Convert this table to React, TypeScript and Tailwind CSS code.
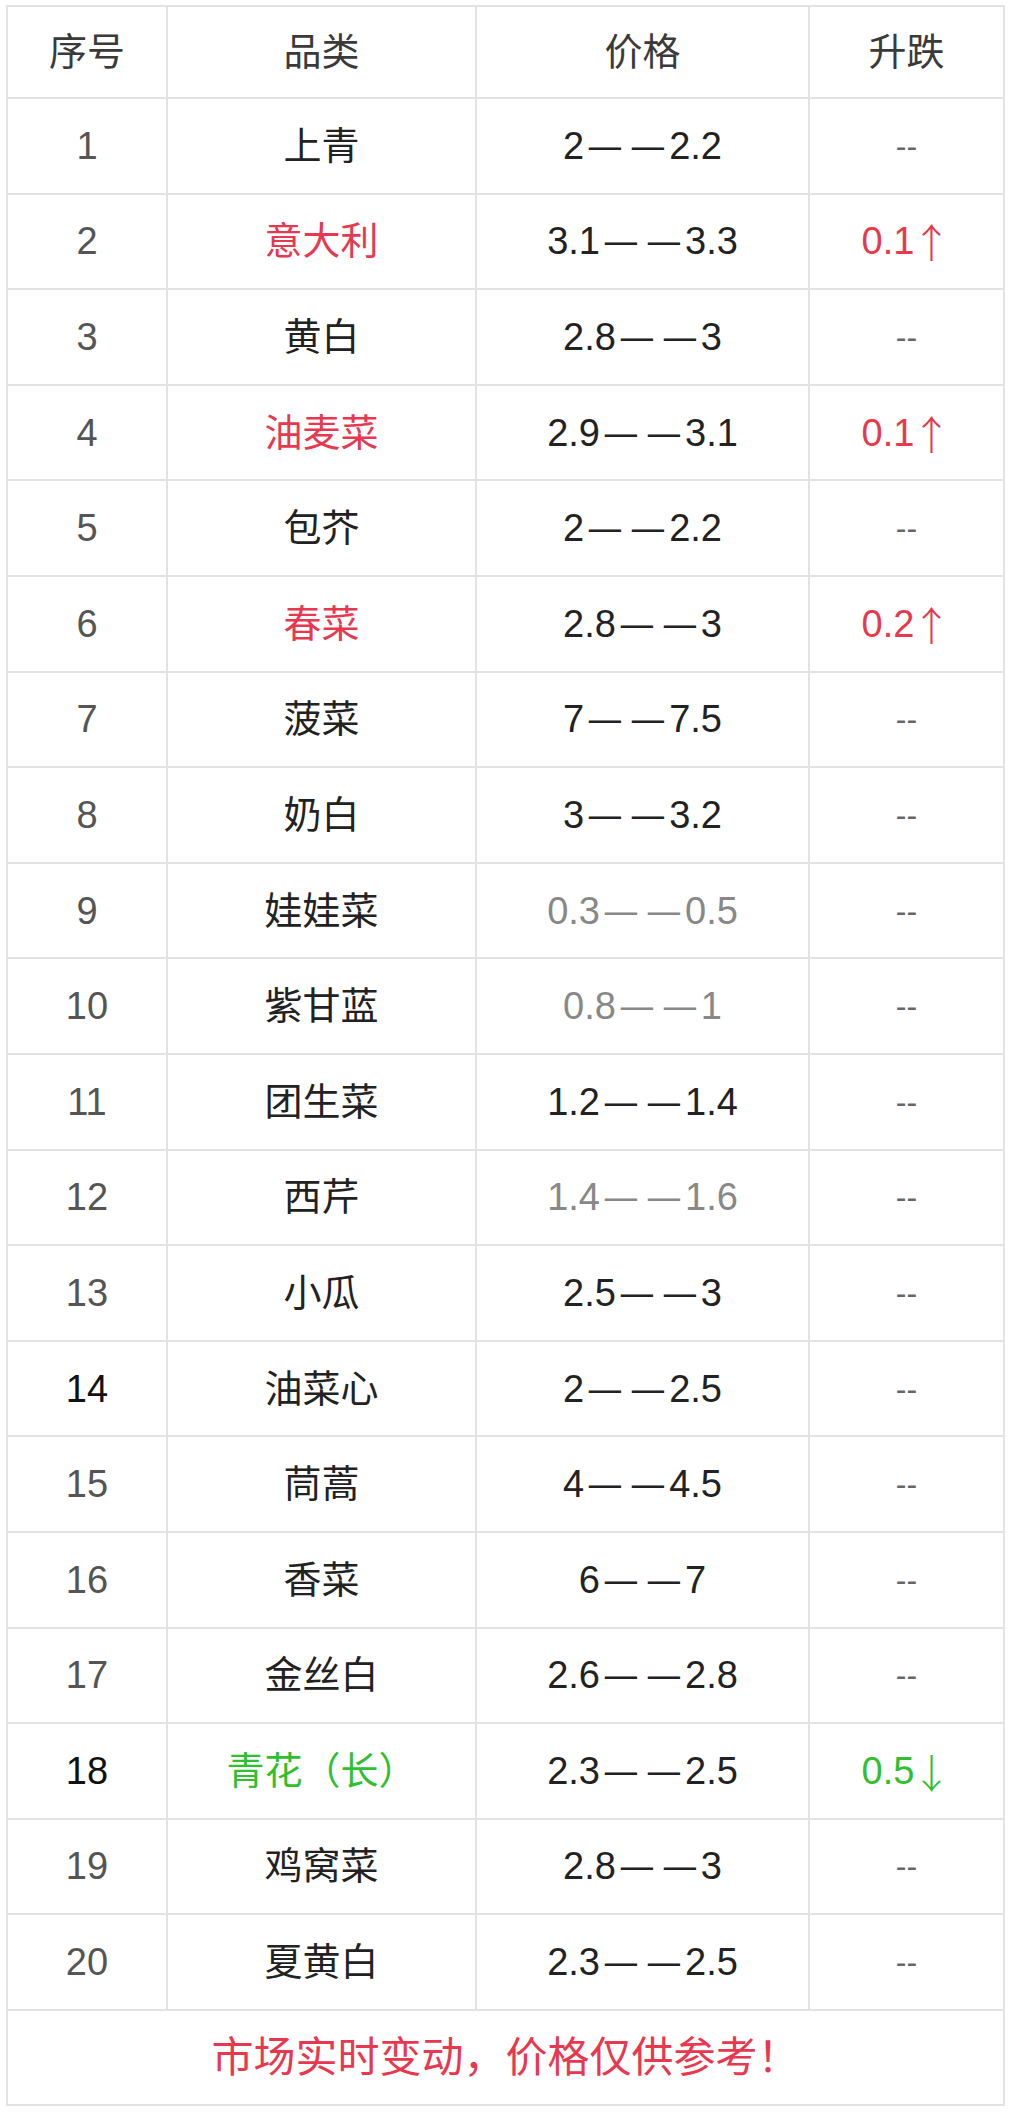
const rows: { no: string; name: string; price: string; change: string; tone?: "up" | "down"; grayPrice?: boolean; darkNo?: boolean }[] = [
  { no: "1", name: "上青", price: "2——2.2", change: "--" },
  { no: "2", name: "意大利", price: "3.1——3.3", change: "0.1↑", tone: "up" },
  { no: "3", name: "黄白", price: "2.8——3", change: "--" },
  { no: "4", name: "油麦菜", price: "2.9——3.1", change: "0.1↑", tone: "up" },
  { no: "5", name: "包芥", price: "2——2.2", change: "--" },
  { no: "6", name: "春菜", price: "2.8——3", change: "0.2↑", tone: "up" },
  { no: "7", name: "菠菜", price: "7——7.5", change: "--" },
  { no: "8", name: "奶白", price: "3——3.2", change: "--" },
  { no: "9", name: "娃娃菜", price: "0.3——0.5", change: "--", grayPrice: true },
  { no: "10", name: "紫甘蓝", price: "0.8——1", change: "--", grayPrice: true },
  { no: "11", name: "团生菜", price: "1.2——1.4", change: "--" },
  { no: "12", name: "西芹", price: "1.4——1.6", change: "--", grayPrice: true },
  { no: "13", name: "小瓜", price: "2.5——3", change: "--" },
  { no: "14", name: "油菜心", price: "2——2.5", change: "--", darkNo: true },
  { no: "15", name: "茼蒿", price: "4——4.5", change: "--" },
  { no: "16", name: "香菜", price: "6——7", change: "--" },
  { no: "17", name: "金丝白", price: "2.6——2.8", change: "--" },
  { no: "18", name: "青花（长）", price: "2.3——2.5", change: "0.5↓", tone: "down", darkNo: true },
  { no: "19", name: "鸡窝菜", price: "2.8——3", change: "--" },
  { no: "20", name: "夏黄白", price: "2.3——2.5", change: "--" },
]

const cell = "bg-white flex items-center justify-center h-[93.6px]"

function Price({ value }: { value: string }) {
  const [lo, hi] = value.split("——")
  return (
    <span>
      {lo}
      <span className="inline-block scale-x-[0.85] ml-[2px] mr-[5px]">—</span>
      <span className="inline-block scale-x-[0.85] mr-[2px]">—</span>
      {hi}
    </span>
  )
}

function Change({ value }: { value: string }) {
  if (value === "--") return <span className="text-[32px]">--</span>
  const num = value.slice(0, -1)
  const arrow = value.slice(-1)
  return (
    <span className="flex items-center">
      {num}
      <span className="ml-[-3px] text-[40px] font-['Noto_Sans_CJK_SC'] font-light">{arrow}</span>
    </span>
  )
}

export default function App() {
  return (
    <div
      className="w-[1014px] h-[2113px] bg-white pt-[5px] pl-[6px]"
      style={{ fontFamily: '"Liberation Sans", "Noto Sans CJK SC", sans-serif' }}
    >
      <div className="w-[999px] grid grid-cols-[158px_307px_331px_193px] gap-[2px] p-[2px] bg-[#e3e3e3] text-[38px] leading-none">
        {["序号", "品类", "价格", "升跌"].map((h) => (
          <div key={h} className="bg-white flex items-center justify-center h-[90px] text-[#3a3a3a]">
            {h}
          </div>
        ))}
        {rows.map((r) => {
          const toneColor = r.tone === "up" ? "text-[#e8384f]" : r.tone === "down" ? "text-[#2fbf2f]" : ""
          return (
            <div key={r.no} className="contents">
              <div className={`${cell} ${r.darkNo ? "text-[#111]" : "text-[#555]"}`}>{r.no}</div>
              <div className={`${cell} ${toneColor || "text-[#222]"}`}>{r.name}</div>
              <div className={`${cell} ${r.grayPrice ? "text-[#888]" : "text-[#222]"}`}>
                <Price value={r.price} />
              </div>
              <div className={`${cell} ${toneColor || "text-[#666]"}`}>
                <Change value={r.change} />
              </div>
            </div>
          )
        })}
        <div className={`${cell} col-span-4 text-[#e8384f] text-[42px]`}>市场实时变动，价格仅供参考！</div>
      </div>
    </div>
  )
}
